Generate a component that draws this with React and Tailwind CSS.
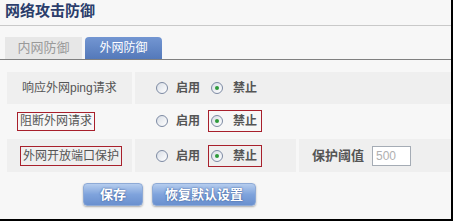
import React from 'react'

function Radio({ checked }) {
  return (
    <span className="inline-flex h-[12px] w-[12px] shrink-0 items-center justify-center rounded-full border border-[#7d8aa3] bg-linear-to-br from-[#d9dee6] to-white">
      {checked && <span className="h-[4px] w-[4px] rounded-full bg-[#2e9a3a]" />}
    </span>
  )
}

function RadioPair({ boxed }) {
  return (
    <div className="flex items-center pl-[21px] text-[12px] font-bold leading-[16px] text-[#555]">
      <Radio />
      <span className="ml-[8px]">启用</span>
      <span
        className={`ml-[8px] inline-flex h-[22px] items-center border pr-[4px] pl-[2px] ${boxed ? 'border-[#a8202c]' : 'border-transparent'}`}
      >
        <Radio checked />
        <span className="ml-[10px]">禁止</span>
      </span>
    </div>
  )
}

function App() {
  return (
    <div className="h-[221px] w-[453px] border-r-2 border-b-2 border-black bg-[#f7f7f7] font-['Liberation_Sans','Noto_Sans_CJK_SC',sans-serif]">
      <div className="h-[26px] border-b border-[#c9c9c9] pt-[1px] pl-[5px] text-[15px] leading-[20px] font-bold text-[#2b3d6b]">
        网络攻击防御
      </div>

      <div className="mt-[11px] flex h-[23px] items-end gap-[3px] border-b border-[#808080] pl-[5px]">
        <div className="flex h-[22px] w-[77px] items-center justify-center bg-[#e7e7e7] text-[13px] text-[#9a9a9a]">
          内网防御
        </div>
        <div className="flex h-[22px] w-[77px] items-center justify-center rounded-t-[4px] bg-linear-to-b from-[#7396d2] to-[#5479ba] text-[12px] text-white">
          外网防御
        </div>
      </div>

      <div className="mt-[12px] ml-[7px]">
        <div className="flex h-[32px] gap-[3px]">
          <div className="flex w-[125px] items-center bg-[#efefef] pl-[15px] text-[12px] text-[#555]">
            响应外网ping请求
          </div>
          <div className="flex flex-1 items-center bg-[#efefef]">
            <RadioPair />
          </div>
        </div>

        <div className="flex h-[34px] gap-[3px]">
          <div className="flex w-[125px] items-center pl-[10px] text-[12px] text-[#555]">
            <span className="border border-[#a8202c] px-[2px] leading-[17px]">阻断外网请求</span>
          </div>
          <div className="flex flex-1 items-center">
            <RadioPair boxed />
          </div>
        </div>

        <div className="mt-[1px] flex h-[33px] gap-[3px]">
          <div className="flex w-[125px] items-center bg-[#efefef] pl-[13px] text-[12px] text-[#555]">
            <span className="border border-[#a8202c] px-[2px] leading-[18px]">外网开放端口保护</span>
          </div>
          <div className="flex w-[161px] items-center bg-[#efefef]">
            <RadioPair boxed />
          </div>
          <div className="flex flex-1 items-center bg-[#efefef] pl-[13px]">
            <span className="text-[13px] font-bold text-[#555]">保护阈值</span>
            <input
              readOnly
              value="500"
              className="ml-[8px] h-[20px] w-[39px] border border-[#a5acb5] bg-white pl-[3px] text-[12px] text-[#b0b0b0] outline-none"
            />
          </div>
        </div>
      </div>

      <div className="mt-[11px] flex gap-[9px] pl-[83px]">
        <button
          type="button"
          className="h-[23px] w-[60px] rounded-[4px] border border-[#8eaad6] bg-linear-to-b from-[#b6cdee] via-[#7fa3dc] to-[#6a90cf] text-[13px] font-bold text-white shadow-[0_1px_2px_rgba(0,0,0,0.3)] [text-shadow:0_0_2px_#2d4e8a]"
        >
          保存
        </button>
        <button
          type="button"
          className="h-[23px] w-[104px] rounded-[4px] border border-[#8eaad6] bg-linear-to-b from-[#b6cdee] via-[#7fa3dc] to-[#6a90cf] text-[13px] font-bold text-white shadow-[0_1px_2px_rgba(0,0,0,0.3)] [text-shadow:0_0_2px_#2d4e8a]"
        >
          恢复默认设置
        </button>
      </div>
    </div>
  )
}

export default App
